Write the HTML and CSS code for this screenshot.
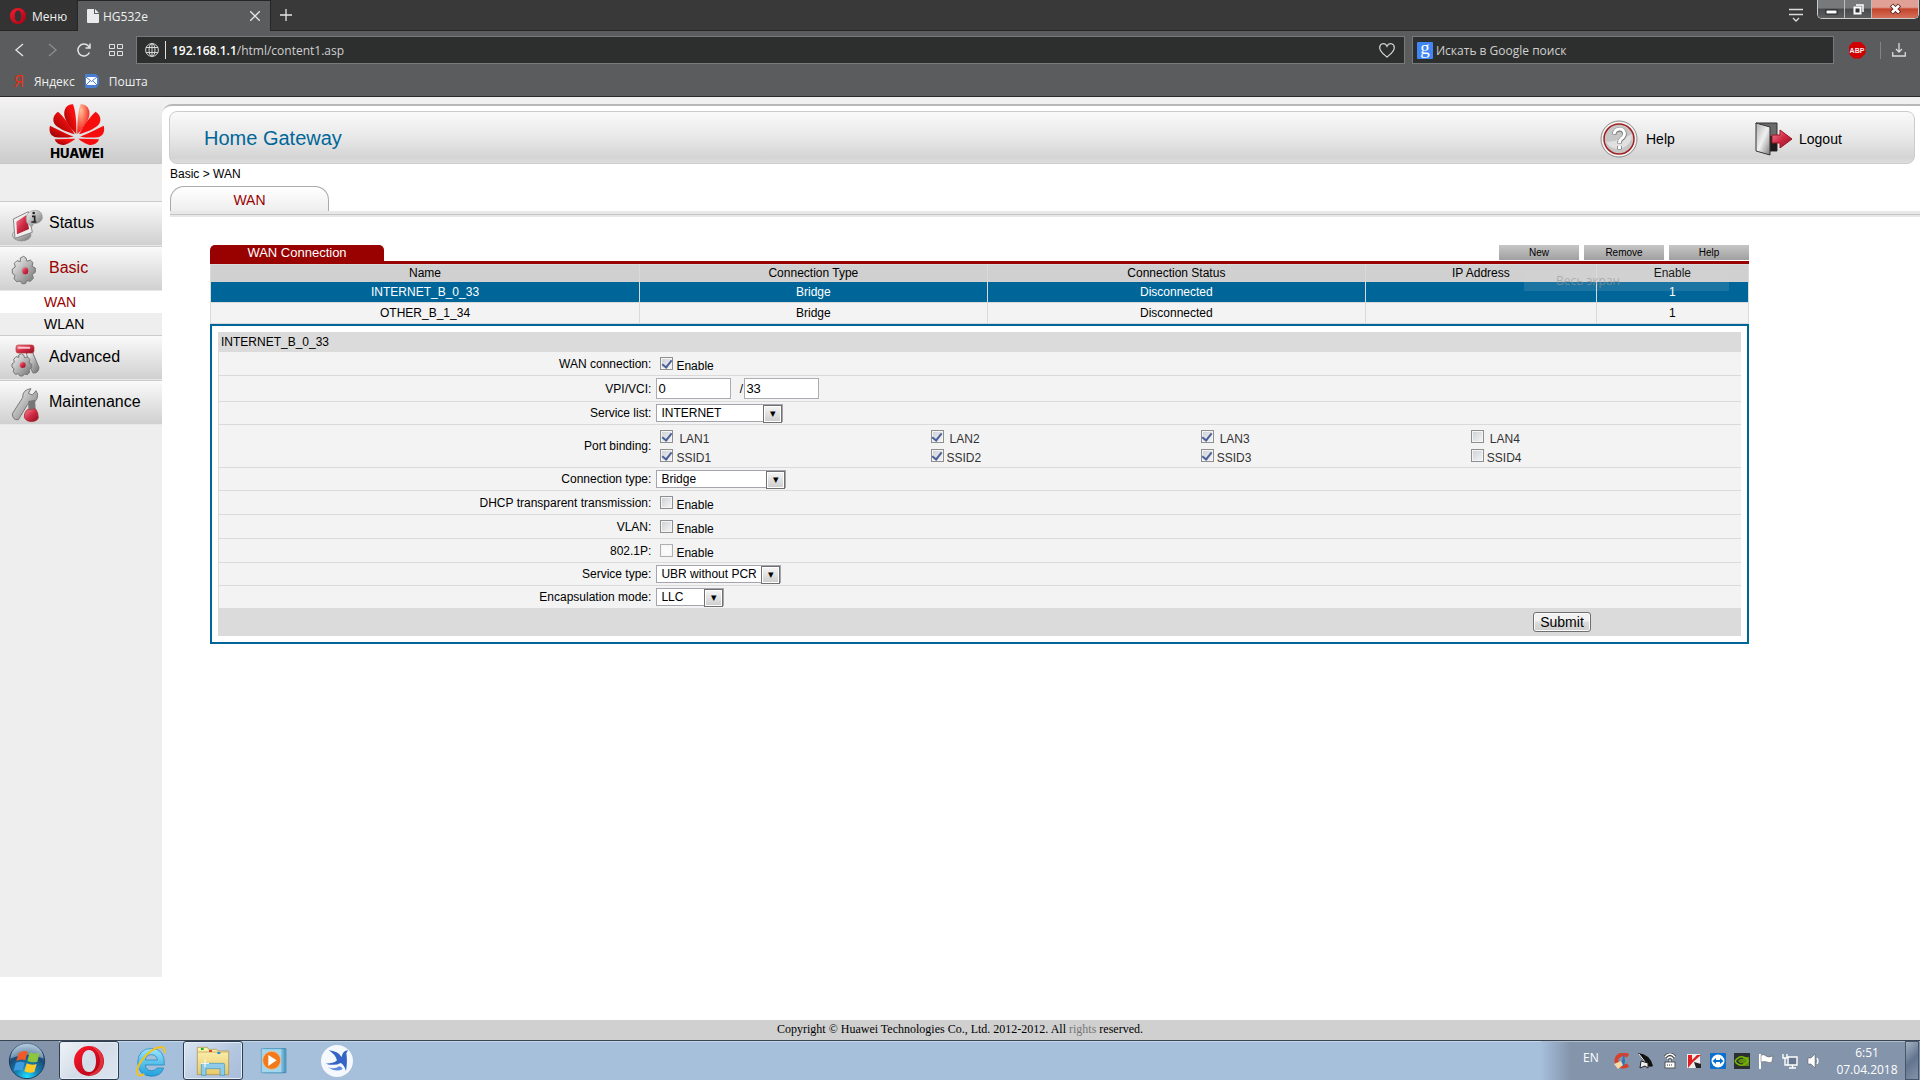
FILE: index.html
```html
<!DOCTYPE html>
<html lang="en">
<head>
    <meta charset="UTF-8">
    <meta name="viewport" content="width=device-width, initial-scale=1.0">
    <title>HG532e</title>
    <link rel="stylesheet" href="styles.css">
</head>
<body>
    <svg class="defs" aria-hidden="true">
        <defs>
            <linearGradient id="metal" x1="0" y1="0" x2="1" y2="1">
                <stop offset="0" stop-color="#fafafa"/>
                <stop offset="0.5" stop-color="#b4b4b4"/>
                <stop offset="1" stop-color="#6e6e6e"/>
            </linearGradient>
            <linearGradient id="red" x1="0" y1="0" x2="1" y2="1">
                <stop offset="0" stop-color="#f08a9a"/>
                <stop offset="0.5" stop-color="#d02a44"/>
                <stop offset="1" stop-color="#8c1020"/>
            </linearGradient>
            <linearGradient id="door" x1="0" y1="0" x2="1" y2="1">
                <stop offset="0" stop-color="#b0b0b0"/>
                <stop offset="0.5" stop-color="#f0f0f0"/>
                <stop offset="1" stop-color="#7a7a7a"/>
            </linearGradient>
            <linearGradient id="petal" x1="1" y1="0" x2="0" y2="1">
                <stop offset="0.3" stop-color="#f81010"/>
                <stop offset="1" stop-color="#8c0000"/>
            </linearGradient>
            <radialGradient id="petalLight" cx="0.7" cy="0.2" r="0.8">
                <stop offset="0" stop-color="#ffc09a"/>
                <stop offset="1" stop-color="#f41a12"/>
            </radialGradient>
            <linearGradient id="opera" x1="0" y1="0" x2="1" y2="1">
                <stop offset="0" stop-color="#ff1b2d"/>
                <stop offset="1" stop-color="#a70014"/>
            </linearGradient>
            <radialGradient id="orb" cx="0.5" cy="0.95" r="0.9">
                <stop offset="0" stop-color="#25e0ff"/>
                <stop offset="0.35" stop-color="#1583b8"/>
                <stop offset="0.7" stop-color="#1b4a75"/>
                <stop offset="1" stop-color="#7ea6c6"/>
            </radialGradient>
            <linearGradient id="folder" x1="0" y1="0" x2="0" y2="1">
                <stop offset="0" stop-color="#fdf3b5"/>
                <stop offset="1" stop-color="#e8c968"/>
            </linearGradient>
            <linearGradient id="ie" x1="0" y1="0" x2="0" y2="1">
                <stop offset="0" stop-color="#9be6fb"/>
                <stop offset="1" stop-color="#1f9fdc"/>
            </linearGradient>
        </defs>
    </svg>

    <header class="browser">
        <div class="tabbar">
            <button class="opera-menu" type="button">
                <svg width="16" height="16" viewBox="0 0 16 16"><path fill="url(#opera)" fill-rule="evenodd" d="M8 0a8 8 0 1 0 0 16a8 8 0 1 0 0-16M8 2.400c2.200 0 3.200 2.600 3.200 5.600s-1 5.600-3.200 5.600s-3.200-2.600-3.200-5.600s1-5.600 3.200-5.600"/></svg>
                Меню
            </button>
            <div class="tab">
                <svg width="12" height="14" viewBox="0 0 12 14"><path fill="#e8eaeb" d="M1 0h6v5h5v8q0 1-1 1h-10q-1 0-1-1v-12q0-1 1-1zM8 0l4 4h-4z"/></svg>
                <span class="tab-title">HG532e</span>
                <button class="icon-button" type="button" aria-label="Close tab">
                    <svg width="10" height="10" viewBox="0 0 10 10"><path d="M0 0l10 10M10 0l-10 10" stroke="#e6e6e6" stroke-width="1.300"/></svg>
                </button>
            </div>
            <button class="icon-button new-tab" type="button" aria-label="New tab">
                <svg width="12" height="12" viewBox="0 0 12 12"><path d="M6 0v12M0 6h12" stroke="#e6e6e6" stroke-width="1.300"/></svg>
            </button>
            <button class="icon-button tab-list" type="button" aria-label="Tab menu">
                <svg width="14" height="14" viewBox="0 0 14 14"><path d="M0 1.500h14M0 6.500h14M4 10l3 3l3-3" fill="none" stroke="#dcdcdc" stroke-width="1.300"/></svg>
            </button>
            <div class="window-buttons">
                <button class="window-button" type="button" aria-label="Minimize">
                    <svg width="13" height="12" viewBox="0 0 13 12"><rect x="1" y="7" width="11" height="4" fill="#fff" stroke="#222"/></svg>
                </button>
                <button class="window-button" type="button" aria-label="Restore">
                    <svg width="13" height="13" viewBox="0 0 13 13"><path d="M4 2h7v7" fill="none" stroke="#fff" stroke-width="1.500"/><rect x="2.500" y="4.500" width="6" height="6" fill="#333" stroke="#fff" stroke-width="2"/></svg>
                </button>
                <button class="window-button window-close" type="button" aria-label="Close">
                    <svg width="13" height="12" viewBox="0 0 13 12"><path d="M2.500 2l8 8M10.500 2l-8 8" stroke="#5a2320" stroke-width="4.500"/><path d="M3 2.500l7 7M10 2.500l-7 7" stroke="#fff" stroke-width="2.600"/></svg>
                </button>
            </div>
        </div>

        <div class="toolbar">
            <button class="icon-button" type="button" aria-label="Back">
                <svg width="14" height="14" viewBox="0 0 14 14"><path d="M10 1l-7 6l7 6" fill="none" stroke="#e2e2e2" stroke-width="1.400"/></svg>
            </button>
            <button class="icon-button" type="button" aria-label="Forward">
                <svg width="14" height="14" viewBox="0 0 14 14"><path d="M4 1l7 6l-7 6" fill="none" stroke="#8b8c8e" stroke-width="1.400"/></svg>
            </button>
            <button class="icon-button" type="button" aria-label="Reload">
                <svg width="14" height="14" viewBox="0 0 14 14"><path d="M12.400 9.500a6 6 0 1 1-1-6.500l1.200 1.500M13 0.500v4.500h-4.500" fill="none" stroke="#e2e2e2" stroke-width="1.500"/></svg>
            </button>
            <button class="icon-button" type="button" aria-label="Speed dial">
                <svg width="14" height="12" viewBox="0 0 14 12"><path d="M.5.500h5v4h-5zM8.500.500h5v4h-5zM.5 7.500h5v4h-5zM8.500 7.500h5v4h-5z" fill="none" stroke="#e2e2e2"/></svg>
            </button>
            <div class="address">
                <svg width="14" height="14" viewBox="0 0 14 14"><g fill="none" stroke="#d8d8d8"><circle cx="7" cy="7" r="6.400"/><ellipse cx="7" cy="7" rx="3" ry="6.400"/><path d="M7 .5v13M1 4.500h12M1 9.500h12"/></g></svg>
                <span class="address-line"></span>
                <span class="url"><b>192.168.1.1</b>/html/content1.asp</span>
                <button class="icon-button" type="button" aria-label="Add to bookmarks">
                    <svg width="16" height="15" viewBox="0 0 16 15"><path d="M8 14c-4-3.500-7.300-5.500-7.300-9.300c0-4.500 5.500-5.500 7.300-1.500c1.800-4 7.300-3 7.300 1.500c0 3.800-3.300 5.800-7.300 9.300z" fill="none" stroke="#d8d8d8" stroke-width="1.200"/></svg>
                </button>
            </div>
            <label class="search">
                <span class="google">g</span>
                <input class="search-input" type="text" placeholder="Искать в Google поиск" aria-label="Искать в Google поиск">
            </label>
            <button class="icon-button adblock" type="button" aria-label="Adblock">
                <span class="abp">ABP</span>
            </button>
            <button class="icon-button downloads" type="button" aria-label="Downloads">
                <svg width="14" height="14" viewBox="0 0 14 14"><path d="M7 0v9M4 6l3 3l3-3M.7 9v4h12.600v-4" fill="none" stroke="#dcdcdc" stroke-width="1.300"/></svg>
            </button>
        </div>

        <nav class="bookmarks">
            <a class="bookmark" href="#"><span class="yandex">Я</span>Яндекс</a>
            <a class="bookmark" href="#">
                <svg width="16" height="16" viewBox="0 0 16 16"><path d="M1 1h11l3 4v6l-3 4h-11z" fill="#4a7ed0"/><rect x="2" y="4" width="11" height="8" fill="#fff"/><path d="M2 4l5.500 4.500l5.500-4.500M2 12l4-4M13 12l-4-4" fill="none" stroke="#4a7ed0"/></svg>
                Пошта
            </a>
        </nav>
    </header>

    <div class="page">
        <aside class="sidebar">
            <div class="logo">
                <svg width="56" height="42" viewBox="149 311 168 126">
                    <g fill="url(#petal)">
                        <path d="M231 401C232 375 229 330 221 312C205 311 192 325 195 345C199 367 215 386 231 401"/>
                        <path d="M226 402C212 375 190 345 176 334C160 345 158 362 168 374C180 386 205 396 226 402"/>
                        <path d="M223 409C200 400 170 385 152 376C147 395 155 408 170 411C190 413 210 411 223 409"/>
                        <path d="M228 415L166 417C170 430 185 436 197 433C210 428 220 422 228 415"/>
                    </g>
                    <g fill="#f60d0d" transform="translate(465 0) scale(-1 1)">
                        <path fill="url(#petalLight)" d="M231 401C232 375 229 330 221 312C205 311 192 325 195 345C199 367 215 386 231 401"/>
                        <path d="M226 402C212 375 190 345 176 334C160 345 158 362 168 374C180 386 205 396 226 402"/>
                        <path d="M223 409C200 400 170 385 152 376C147 395 155 408 170 411C190 413 210 411 223 409"/>
                        <path d="M228 415L166 417C170 430 185 436 197 433C210 428 220 422 228 415"/>
                    </g>
                </svg>
                <span class="logo-name">HUAWEI</span>
            </div>
            <nav class="menu">
                <a class="menu-item" href="#">
                    <svg width="32" height="34" viewBox="36 58 96 102">
                        <ellipse cx="68" cy="136" rx="28" ry="18" fill="url(#metal)" stroke="#888" stroke-width="2"/>
                        <path d="M43 88L88 66L100 128L48 146Z" fill="#eee" stroke="#888" stroke-width="3"/>
                        <path d="M52 96L82 76L90 118L54 134Z" fill="url(#red)"/>
                        <path d="M84 100c-8-22 6-38 24-38s22 12 22 22s-12 18-26 18l-6 10z" fill="url(#metal)" stroke="#999" stroke-width="2"/>
                        <path d="M99 80h8v16M97 97h15" fill="none" stroke="#222" stroke-width="5"/><circle cx="104" cy="70" r="4" fill="#222"/>
                    </svg>
                    Status
                </a>
                <a class="menu-item active" href="#">
                    <svg width="32" height="34" viewBox="34 190 96 102">
                        <path d="M62 202l10-5l7 5l3 10l10-4l8 8l-3 11l10 5v13l-9 6l3 12l-9 9l-10-2l-5 9h-10l-5-8l-11 2l-8-9l3-10l-8-6v-13l9-6l-3-11l8-8l10 3z" fill="url(#metal)" stroke="#777" stroke-width="3"/>
                        <ellipse cx="77" cy="241" rx="11" ry="12" fill="url(#red)" stroke="#aaa" stroke-width="3"/>
                    </svg>
                    Basic
                </a>
                <div class="submenu">
                    <a class="submenu-item active" href="#">WAN</a>
                    <a class="submenu-item" href="#">WLAN</a>
                </div>
                <a class="menu-item" href="#">
                    <svg width="32" height="34" viewBox="32 454 96 102">
                        <path d="M78 484L96 480L116 528Q114 546 98 544L90 528Z" fill="url(#metal)" stroke="#777" stroke-width="3"/>
                        <rect x="47" y="460" width="54" height="24" rx="7" fill="url(#red)" stroke="#b33" stroke-width="2"/>
                        <rect x="52" y="465" width="38" height="6" rx="3" fill="#fbc4cc"/>
                        <path d="M55 490l8-4l7 4l3 8l9-2l7 8l-3 9l8 5v10l-8 5l2 9l-7 7l-9-2l-5 6h-8l-5-7l-9 2l-6-8l2-9l-6-5v-9l7-5l-2-9l7-8l9 2z" fill="url(#metal)" stroke="#777" stroke-width="3"/>
                        <circle cx="67" cy="520" r="9" fill="url(#red)"/>
                    </svg>
                    Advanced
                </a>
                <a class="menu-item" href="#">
                    <svg width="32" height="36" viewBox="24 584 96 108">
                        <path d="M84 589Q58 592 59 616L28 664Q29 685 46 682L74 636Q104 634 104 606L99 595L88 608L76 603Z" fill="url(#metal)" stroke="#777" stroke-width="3"/>
                        <path d="M76 626L96 622L98 650L76 652Z" fill="#777"/>
                        <path d="M72 652Q62 662 64 676Q70 688 86 688Q104 686 106 676Q106 660 98 650Z" fill="url(#red)" stroke="#a22" stroke-width="2"/>
                    </svg>
                    Maintenance
                </a>
            </nav>
        </aside>

        <main class="content">
            <div class="banner">
                <h1 class="banner-title">Home Gateway</h1>
                <a class="banner-link help-link" href="#">
                    <svg width="38" height="38" viewBox="0 0 38 38">
                        <circle cx="19" cy="19" r="18" fill="#f4f4f4" stroke="#8b8b8b"/>
                        <circle cx="19" cy="19" r="15" fill="#c6c6c6" stroke="#a32020" stroke-width="1.500"/>
                        <path d="M6 22q14-1 26-8a14 14 0 0 1-26 8" fill="#e0e0e0"/>
                        <path d="M14 14.500q1-5 5.500-5t5 4.500q0 3-3 5q-2 1.500-2 4.500M19.500 26v3.500" fill="none" stroke="#777" stroke-width="4.500"/>
                        <path d="M14 14q1-5 5.500-5t5 4.500q0 3-3 5q-2 1.500-2 4.500M19.500 26v3" fill="none" stroke="#fff" stroke-width="3"/>
                    </svg>
                    Help
                </a>
                <a class="banner-link logout-link" href="#">
                    <svg width="38" height="34" viewBox="0 0 38 34">
                        <path d="M1 1h21v28h-8z" fill="#6b6b6b" stroke="#333"/>
                        <path d="M15 14h7v15h-7z" fill="#211a1a"/>
                        <path d="M1 1l14 4v28l-14-4z" fill="url(#door)" stroke="#333"/>
                        <path d="M17 13h8v-5l12 9l-12 9v-5h-8z" fill="url(#red)" stroke="#9c1626"/>
                    </svg>
                    Logout
                </a>
            </div>

            <p class="breadcrumb">Basic &gt; WAN</p>
            <div class="page-tabs">
                <a class="page-tab" href="#">WAN</a>
            </div>

            <section class="wan">
                <div class="wan-head">
                    <h2 class="wan-title">WAN Connection</h2>
                    <div class="wan-buttons">
                        <button class="wan-button" type="button">New</button>
                        <button class="wan-button" type="button">Remove</button>
                        <button class="wan-button" type="button">Help</button>
                    </div>
                </div>
                <div class="wan-list">
                    <table class="wan-table">
                        <thead>
                            <tr>
                                <th class="col-name">Name</th>
                                <th class="col-type">Connection Type</th>
                                <th class="col-status">Connection Status</th>
                                <th class="col-ip">IP Address</th>
                                <th>Enable</th>
                            </tr>
                        </thead>
                        <tbody>
                            <tr class="selected">
                                <td>INTERNET_B_0_33</td>
                                <td>Bridge</td>
                                <td>Disconnected</td>
                                <td></td>
                                <td>1</td>
                            </tr>
                            <tr>
                                <td>OTHER_B_1_34</td>
                                <td>Bridge</td>
                                <td>Disconnected</td>
                                <td></td>
                                <td>1</td>
                            </tr>
                        </tbody>
                    </table>
                    <div class="fading-tip">Весь экран</div>
                </div>

                <form class="wan-form">
                    <h3 class="form-title">INTERNET_B_0_33</h3>
                    <div class="row">
                        <label class="row-label" for="wanEnable">WAN connection:</label>
                        <div class="row-value">
                            <label class="check"><input type="checkbox" id="wanEnable" checked><span>Enable</span></label>
                        </div>
                    </div>
                    <div class="row">
                        <label class="row-label" for="vpi">VPI/VCI:</label>
                        <div class="row-value">
                            <input class="number" type="text" id="vpi" value="0">
                            <span class="slash">/</span>
                            <input class="number" type="text" id="vci" value="33" aria-label="VCI">
                        </div>
                    </div>
                    <div class="row">
                        <label class="row-label" for="serviceList">Service list:</label>
                        <div class="row-value">
                            <span class="select"><select id="serviceList" class="select-service"><option>INTERNET</option></select></span>
                        </div>
                    </div>
                    <div class="row">
                        <span class="row-label">Port binding:</span>
                        <div class="row-value ports">
                            <label class="check lan"><input type="checkbox" checked><span>LAN1</span></label>
                            <label class="check lan"><input type="checkbox" checked><span>LAN2</span></label>
                            <label class="check lan"><input type="checkbox" checked><span>LAN3</span></label>
                            <label class="check lan"><input type="checkbox"><span>LAN4</span></label>
                            <label class="check"><input type="checkbox" checked><span>SSID1</span></label>
                            <label class="check"><input type="checkbox" checked><span>SSID2</span></label>
                            <label class="check"><input type="checkbox" checked><span>SSID3</span></label>
                            <label class="check"><input type="checkbox"><span>SSID4</span></label>
                        </div>
                    </div>
                    <div class="row">
                        <label class="row-label" for="connectionType">Connection type:</label>
                        <div class="row-value">
                            <span class="select"><select id="connectionType" class="select-connection"><option>Bridge</option></select></span>
                        </div>
                    </div>
                    <div class="row">
                        <label class="row-label" for="dhcp">DHCP transparent transmission:</label>
                        <div class="row-value">
                            <label class="check"><input type="checkbox" id="dhcp"><span>Enable</span></label>
                        </div>
                    </div>
                    <div class="row">
                        <label class="row-label" for="vlan">VLAN:</label>
                        <div class="row-value">
                            <label class="check"><input type="checkbox" id="vlan"><span>Enable</span></label>
                        </div>
                    </div>
                    <div class="row">
                        <label class="row-label" for="priority">802.1P:</label>
                        <div class="row-value">
                            <label class="check"><input type="checkbox" id="priority" disabled><span>Enable</span></label>
                        </div>
                    </div>
                    <div class="row">
                        <label class="row-label" for="serviceType">Service type:</label>
                        <div class="row-value">
                            <span class="select"><select id="serviceType" class="select-type"><option>UBR without PCR</option></select></span>
                        </div>
                    </div>
                    <div class="row last">
                        <label class="row-label" for="encapsulation">Encapsulation mode:</label>
                        <div class="row-value">
                            <span class="select"><select id="encapsulation" class="select-mode"><option>LLC</option></select></span>
                        </div>
                    </div>
                    <div class="form-footer">
                        <button class="submit" type="button">Submit</button>
                    </div>
                </form>
            </section>
        </main>
    </div>

    <footer class="copyright">Copyright © Huawei Technologies Co., Ltd. 2012-2012. All <span class="dim">rights</span> reserved.</footer>

    <div class="taskbar">
        <button class="start" type="button" aria-label="Start">
            <svg width="38" height="38" viewBox="24 93 114 114">
                <circle cx="81" cy="150" r="53" fill="url(#orb)" stroke="#1e3f5f" stroke-width="3"/>
                <path d="M32 142a49 46 0 0 1 98 0q-49-22-98 0" fill="#fff" opacity="0.350"/>
                <path d="M56 126q14-10 27-4l-7 26q-14-6-27 2z" fill="#f0592a"/>
                <path d="M89 124q14 7 30 1l-7 27q-15 5-30-2z" fill="#8cc63f"/>
                <path d="M47 156q14-7 27-1l-7 24q-14-5-26 2z" fill="#3f9be0"/>
                <path d="M80 157q15 7 30 2l-7 24q-15 5-30-2z" fill="#fdc928"/>
            </svg>
        </button>
        <button class="task open focused" type="button" aria-label="Opera">
            <svg width="30" height="30" viewBox="0 0 30 30"><path fill="url(#opera)" fill-rule="evenodd" d="M15 0a15 15 0 1 0 0 30a15 15 0 1 0 0-30M15 4c5 0 7 5 7 11s-2 11-7 11s-7-5-7-11s2-11 7-11"/><path d="M20 1a15 15 0 0 1 0 28q-3 1-6 0c7-2 12-7 12-14s-4-12-10-15z" fill="#ff5a5a" opacity="0.500"/></svg>
        </button>
        <button class="task" type="button" aria-label="Internet Explorer">
            <svg width="32" height="32" viewBox="406 98 96 96">
                <path d="M494 158h-57q2 17 19 17q11 0 16-8h20q-8 25-37 25q-40-2-41-42q2-41 42-42q40 2 38 50M437 143h36q-2-16-18-16t-18 16" fill="url(#ie)" stroke="#1b7fb8" stroke-width="2"/>
                <path d="M494 122q4-22-16-17q-26 6-50 37q-24 34-12 46q6 4 18-3" fill="none" stroke="#f5c21b" stroke-width="6"/>
            </svg>
        </button>
        <button class="task open" type="button" aria-label="Explorer">
            <svg width="34" height="30" viewBox="588 108 102 90">
                <path d="M592 194v-82h30l4 6h24l4 5h32v71z" fill="url(#folder)" stroke="#a58a3c" stroke-width="2"/>
                <path d="M594 126h90" stroke="#cdb162" stroke-width="3"/>
                <path d="M603 114h8v6h-8z" fill="#1fb51f"/><path d="M627 120h9v6h-9z" fill="#d8452c"/><path d="M652 126h9v6h-9z" fill="#2c8fd8"/>
                <path d="M604 196v-32q0-4 4-4h62q4 0 4 4v32h-14v-20h-42v20z" fill="#8dcbe8" stroke="#3f93bd" stroke-width="2"/>
                <path d="M615 148v24M603 160h24" stroke="#fff" stroke-width="3"/>
            </svg>
        </button>
        <button class="task" type="button" aria-label="Media Player">
            <svg width="30" height="28" viewBox="780 113 90 84">
                <path d="M800 118h58v72h-58z" fill="#5fa9d0" stroke="#357fa8" stroke-width="2"/>
                <path d="M792 118h60v72h-60z" fill="#85c4e2" stroke="#357fa8" stroke-width="2"/>
                <path d="M784 118h62v72h-62z" fill="#a3d5ec" stroke="#4f98be" stroke-width="2"/>
                <circle cx="815" cy="153" r="27" fill="#f37a1c" stroke="#fbc38b" stroke-width="2"/>
                <path d="M805 137l25 16l-25 17z" fill="#fff"/>
            </svg>
        </button>
        <button class="task" type="button" aria-label="Swallow">
            <svg width="32" height="32" viewBox="963 102 96 96">
                <circle cx="1011" cy="150" r="48" fill="#f5f8fc"/>
                <path d="M986 118Q1014 120 1025 138Q1028 118 1044 118L1039 127Q1043 150 1038 180Q1032 160 1022 156Q1004 166 977 158Q1002 158 1011 148Q1006 130 986 118Z" fill="#3565c4"/>
                <path d="M984 168q18 8 34-2q8 2 10 8q-20 12-44-6" fill="#5d8be0"/>
            </svg>
        </button>

        <div class="tray">
            <span class="lang">EN</span>
            <div class="tray-icons">
                <svg width="16" height="16" viewBox="0 0 16 16"><path d="M14 3a7 6 0 1 0 0 9" fill="none" stroke="#d7402b" stroke-width="4"/><path d="M10 0l-2 8l-6 5l8 0l1-5z" fill="#2d74b8"/><path d="M0 11l7-3l2 4l-5 4z" fill="#f5d9a8"/></svg>
                <svg width="16" height="16" viewBox="0 0 16 16"><path d="M0 0q12 1 15 13q-3 2-7-1z" fill="#111"/><path d="M1 1l6 8" stroke="#fff"/><path d="M3 8l7 2v5l-3-2l-5 2z" fill="#eee" stroke="#222"/></svg>
                <svg width="16" height="16" viewBox="0 0 16 16"><path d="M3 4q5-6 10 0M5 6q3-4 6 0M8 7v3" fill="none" stroke="#444" stroke-width="3"/><path d="M3 4q5-6 10 0M5 6q3-4 6 0M8 7v3" fill="none" stroke="#fff" stroke-width="1.400"/><rect x="3" y="9" width="10" height="6" fill="#fff" stroke="#555"/><path d="M5 12h6" stroke="#333" stroke-dasharray="1 1"/></svg>
                <svg width="16" height="16" viewBox="0 0 16 16"><rect x="1" y="1" width="13" height="14" fill="#eee"/><path d="M2 2h4v5l5-5h4l-8 7l-5 6z" fill="#e02020"/><path d="M8 9l7 2v4h-5z" fill="#222"/></svg>
                <svg width="16" height="16" viewBox="0 0 16 16"><rect width="16" height="16" rx="1" fill="#0b6fd0"/><circle cx="8" cy="8" r="6.500" fill="#fff"/><path d="M2.500 8l3.500-3v2h4v-2l3.500 3l-3.500 3v-2h-4v2z" fill="#0b6fd0"/></svg>
                <svg width="16" height="16" viewBox="0 0 16 16"><rect width="16" height="16" fill="#2c2f31"/><path d="M1 8q4-5 8-4t5 4q-4 5-8 4t-5-4" fill="none" stroke="#76b900" stroke-width="1.500"/><path d="M4 8q2-3 5-2t2 3q-3 2-5 1M9 4h6v9h-6z" fill="#76b900" opacity="0.700"/></svg>
                <svg width="16" height="16" viewBox="0 0 16 16"><path d="M2 1v15" stroke="#fff" stroke-width="2"/><path d="M3 2q3-1 5 1t7 0q-1 4-1 6q-3 1-5 0t-6 0z" fill="#fff" stroke="#555" stroke-width="0.500"/></svg>
                <svg width="16" height="16" viewBox="0 0 16 16"><path d="M1 1v4h4v-4M3 5v7h3" fill="none" stroke="#fff" stroke-width="1.400"/><path d="M6 4h9v8h-9zM7 15h7M10.500 12v3" fill="#66778f" stroke="#fff" stroke-width="1.400"/></svg>
                <svg width="16" height="16" viewBox="0 0 16 16"><path d="M2 5h3l4-4v14l-4-4h-3z" fill="#fff" stroke="#555" stroke-width="0.500"/><path d="M11 5q2 3 0 6" fill="none" stroke="#fff" stroke-width="1.300"/></svg>
            </div>
            <time class="clock"><span>6:51</span><span>07.04.2018</span></time>
            <button class="show-desktop" type="button" aria-label="Show desktop"></button>
        </div>
    </div>
</body>
</html>
```
FILE: styles.css
```css
* {
    box-sizing: border-box;
}
body {
    display: flex;
    flex-direction: column;
    min-height: 100vh;
    margin: 0;
    font-family: "Liberation Sans", Arial, sans-serif;
    font-size: 12px;
    color: #000;
    background: #fff;
}
h1, h2, h3, p {
    margin: 0;
    font-weight: normal;
}
a {
    color: inherit;
    text-decoration: none;
}
button, input, select {
    font-family: inherit;
    font-size: inherit;
    color: inherit;
}
svg {
    display: block;
    flex: none;
}
.defs {
    position: absolute;
    width: 0;
    height: 0;
}

/* Browser window */
.browser {
    height: 97px;
    border-bottom: 1px solid #28292a;
    background: #5b5c5e;
    color: #f0f0f0;
    font-family: "Open Sans", "Noto Sans", sans-serif;
}
.tabbar {
    display: flex;
    height: 31px;
    border-bottom: 1px solid #262626;
    background: #393939;
}
.icon-button {
    display: flex;
    align-items: center;
    justify-content: center;
    padding: 0;
    border: none;
    background: none;
}
.opera-menu {
    display: flex;
    align-items: center;
    gap: 6px;
    width: 78px;
    padding: 2px 0 0 10px;
    border: none;
    border-right: 1px solid #262626;
    background: #333;
}
.tab {
    display: flex;
    align-items: center;
    gap: 4px;
    width: 193px;
    height: 31px;
    padding: 0 10px 0 9px;
    border-top: 1px solid #262626;
    border-right: 1px solid #262626;
    background: #5b5c5e;
}
.tab-title {
    flex: 1;
}
.new-tab {
    width: 29px;
}
.tab-list {
    width: 14px;
    margin-left: auto;
    margin-right: 14px;
}
.window-buttons {
    display: flex;
    height: 19px;
    margin-right: 1px;
    border: 1px solid #ccc;
    border-top: none;
    border-radius: 0 0 5px 5px;
    overflow: hidden;
}
.window-button {
    display: flex;
    align-items: center;
    justify-content: center;
    width: 27px;
    padding: 0;
    border: none;
    border-right: 1px solid #bbb;
    background: linear-gradient(#77797b 45%, #48494b 50%, #5d5e60);
}
.window-close {
    width: 46px;
    border-right: none;
    background: linear-gradient(#e0a095 40%, #c4442c 50%, #d4705a);
}
.toolbar {
    display: flex;
    align-items: center;
    height: 38px;
    padding: 0 14px 0 4px;
}
.toolbar > .icon-button {
    width: 32px;
}
.address {
    display: flex;
    align-items: center;
    gap: 6px;
    flex: 1;
    height: 28px;
    margin-left: 4px;
    padding: 0 9px 0 8px;
    border: 1px solid #77797a;
    background: #2d2f2e;
}
.address-line {
    width: 1px;
    height: 18px;
    background: #e0e0e0;
}
.url {
    flex: 1;
    color: #d0d0d0;
}
.url b {
    color: #fff;
    font-weight: 600;
}
.search {
    display: flex;
    align-items: center;
    gap: 3px;
    width: 422px;
    height: 28px;
    margin-left: 7px;
    padding: 0 4px;
    border: 1px solid #77797a;
    background: #2d2f2e;
}
.google {
    width: 16px;
    height: 17px;
    border-radius: 1px;
    background: #4285f4;
    color: #fff;
    font: 19px/12px "Liberation Serif", serif;
    text-align: center;
}
.search-input {
    flex: 1;
    min-width: 0;
    padding: 0;
    border: none;
    background: none;
}
.search-input::placeholder {
    color: #d0d0d0;
}
.toolbar > .adblock {
    width: 47px;
    border-right: 1px solid #838485;
}
.abp {
    width: 17px;
    background: #d00000;
    clip-path: polygon(30% 0, 70% 0, 100% 30%, 100% 70%, 70% 100%, 30% 100%, 0 70%, 0 30%);
    font: bold 7px/17px "Liberation Sans", sans-serif;
    text-align: center;
}
.toolbar > .downloads {
    width: 25px;
    justify-content: flex-end;
}
.bookmarks {
    display: flex;
    gap: 9px;
    padding: 3px 14px;
}
.bookmark {
    display: flex;
    align-items: center;
    gap: 9px;
    height: 18px;
}
.yandex {
    width: 11px;
    color: #f22b10;
    font-size: 16px;
}

/* Router page */
.page {
    display: flex;
    flex: 1;
    margin-bottom: 43px;
    background: #f1f1f1;
}
.sidebar {
    width: 162px;
    background: #eee;
}
.logo {
    display: flex;
    flex-direction: column;
    align-items: center;
    height: 67px;
    padding: 7px 8px 0 0;
    border-bottom: 1px solid #c8c8c8;
    background: linear-gradient(#f4f2f2, #e6e6e6 40%, #ccc);
}
.logo-name {
    font: 800 13px/15px Inter, sans-serif;
}
.menu {
    margin-top: 37px;
}
.menu-item {
    display: flex;
    align-items: center;
    gap: 6px;
    height: 45px;
    padding: 0 0 1px 11px;
    border-top: 1px solid #ccc;
    border-bottom: 1px solid #e8e8e8;
    background: linear-gradient(#fafafa, #d0d0d0);
    font-size: 16px;
}
.menu-item svg {
    margin-top: 5px;
}
.active {
    color: #900;
}
.submenu {
    font-size: 14px;
}
.submenu-item {
    display: block;
    padding-left: 44px;
    line-height: 22px;
}
.submenu-item.active {
    background: #fff;
}
.content {
    flex: 1;
    min-width: 0;
    margin-top: 7px;
    border-top: 2px solid #b8b8b8;
    border-radius: 10px 0 0 0;
    background: #fff;
}
.banner {
    display: flex;
    align-items: center;
    height: 53px;
    margin: 5px 5px 0 7px;
    padding: 2px 0 0 34px;
    border: 1px solid #ccc;
    border-radius: 8px;
    background: linear-gradient(#fafafa, #e8e8e8 50%, #d4d4d4 90%, #dedede);
}
.banner-title {
    flex: 1;
    color: #069;
    font-size: 20px;
}
.banner-link {
    display: flex;
    align-items: center;
    font-size: 14px;
}
.help-link {
    gap: 8px;
    width: 155px;
}
.logout-link {
    gap: 6px;
    width: 159px;
}
.breadcrumb {
    padding-left: 8px;
    line-height: 20px;
}
.page-tabs {
    height: 31px;
    margin: 2px 0 0 8px;
    background: linear-gradient(#e8e8e8 3px, #c4c4c4 3px, #c4c4c4 4px, #e8e8e8 4px) 0 100% / 100% 6px no-repeat;
}
.page-tab {
    display: block;
    width: 159px;
    height: 25px;
    border: 1px solid #aaa;
    border-bottom: none;
    border-radius: 14px 14px 0 0;
    background: linear-gradient(#fff, #eee);
    color: #900;
    font-size: 14px;
    line-height: 27px;
    text-align: center;
}
.wan {
    margin: 28px 171px 0 48px;
}
.wan-head {
    display: flex;
    justify-content: space-between;
    border-bottom: 3px solid #900;
}
.wan-title {
    width: 174px;
    border-radius: 5px 5px 0 0;
    background: #900;
    color: #fff;
    font-size: 13px;
    line-height: 16px;
    text-align: center;
}
.wan-buttons {
    display: flex;
    gap: 5px;
    height: 15px;
}
.wan-button {
    width: 80px;
    padding: 0;
    border: none;
    background: linear-gradient(#c6c6c6, #a0a0a0);
    font-size: 10px;
}
.wan-list {
    position: relative;
}
.wan-table {
    width: 100%;
    table-layout: fixed;
    border-collapse: collapse;
    text-align: center;
}
.wan-table th, .wan-table td {
    height: 21px;
    padding: 0;
    border: 1px solid #dadada;
    background: #f3f3f3;
}
.wan-table th {
    height: 17px;
    border-bottom: none;
    background: #d0d0d0;
    font-weight: normal;
}
.wan-table .selected td {
    border-top: none;
    background: #069;
    color: #fff;
}
.col-name {
    width: 27.9%;
}
.col-type {
    width: 22.6%;
}
.col-status {
    width: 24.6%;
}
.col-ip {
    width: 15%;
}
/* Browser tip on its way out */
.fading-tip {
    position: absolute;
    top: 6px;
    right: 20px;
    width: 205px;
    padding-left: 32px;
    background: rgba(220, 220, 220, 0.120);
    color: rgba(150, 150, 150, 0.600);
    font: 12px/21px "Open Sans", "Noto Sans", sans-serif;
}
.wan-form {
    padding: 6px;
    border: 2px solid #069;
}
.form-title {
    padding-left: 3px;
    background: #dbdbdb;
    font-size: 12px;
    line-height: 20px;
}
.row {
    display: flex;
    align-items: center;
    min-height: 24px;
    border-bottom: 1px solid #dadada;
    border-left: 1px solid #dadada;
    background: #f3f3f3;
}
.row:has(select) {
    min-height: 23px;
}
.row.last {
    min-height: 22px;
    border-bottom: none;
}
.row-label {
    width: 29%;
    padding-right: 9px;
    text-align: right;
}
.row-value {
    display: flex;
    align-items: center;
    flex: 1;
    padding: 2px 0;
}
.check {
    display: flex;
    align-items: center;
    gap: 3px;
    height: 19px;
}
.check span {
    padding-top: 4px;
}
.check input {
    display: flex;
    align-items: center;
    justify-content: center;
    appearance: none;
    width: 13px;
    height: 13px;
    margin: 0;
    border: 1px solid #8e8f8f;
    background: linear-gradient(135deg, #cbcfd5, #f6f6f6);
    box-shadow: inset 0 0 0 1px #f4f4f4;
}
.check input:checked::before {
    content: "";
    width: 4px;
    height: 8px;
    margin-bottom: 2px;
    border: solid #4b5f9a;
    border-width: 0 2px 2px 0;
    transform: rotate(38deg);
}
.check input:disabled {
    border-color: #b1b1b1;
    background: #fafafa;
}
.ports {
    display: grid;
    grid-template-columns: repeat(4, 1fr);
    color: #333;
}
.check.lan {
    gap: 6px;
}
.number {
    width: 75px;
    height: 21px;
    margin-left: -4px;
    padding: 0 1px;
    border: 1px solid #abadb3;
    background: #fff;
    font-size: 13px;
}
.slash {
    width: 17px;
    padding-left: 3px;
    text-align: center;
}
.select {
    position: relative;
    margin-left: -4px;
}
.select select {
    display: block;
    appearance: none;
    height: 18px;
    padding: 0 0 0 4px;
    border: 1px solid #a5a5ad;
    border-radius: 0;
    background: #fff;
}
.select::after {
    content: "▾";
    position: absolute;
    top: 1px;
    right: 1px;
    width: 17px;
    height: 16px;
    border: 1px solid #707070;
    background: linear-gradient(#f6f6f6, #ccc);
    box-shadow: inset 0 0 0 1px #fff;
    font: 11px/16px "DejaVu Sans", sans-serif;
    text-align: center;
    pointer-events: none;
}
.select-service {
    width: 127px;
}
.select-connection {
    width: 130px;
}
.select-type {
    width: 125px;
}
.select-mode {
    width: 68px;
}
.form-footer {
    display: flex;
    justify-content: flex-end;
    padding: 4px 150px 4px 0;
    background: #dbdbdb;
}
.submit {
    width: 58px;
    height: 20px;
    padding: 0;
    border: 1px solid #707070;
    border-radius: 3px;
    background: linear-gradient(#f2f2f2 45%, #dcdcdc 50%, #cfcfcf);
    box-shadow: inset 0 0 0 1px #fafafa;
    font-size: 14px;
    line-height: 16px;
}
.copyright {
    padding-bottom: 2px;
    background: #d0d0d0;
    font: 12px/18px "Liberation Serif", serif;
    text-align: center;
}
.dim {
    color: #777;
}

/* Windows taskbar */
.taskbar {
    display: flex;
    height: 40px;
    border-top: 1px solid #3a4554;
    background: #a6bfdb;
    box-shadow: inset 0 1px #c5d6e8;
    font-family: "Open Sans", "Noto Sans", sans-serif;
}
.start {
    display: flex;
    align-items: center;
    justify-content: center;
    width: 59px;
    padding: 0 5px 0 0;
    border: none;
    background: #8394ab;
}
.task {
    display: flex;
    align-items: center;
    justify-content: center;
    width: 60px;
    margin-right: 2px;
    padding: 0;
    border: 1px solid transparent;
    background: none;
}
.task.open {
    border-color: #2e3d50;
    border-radius: 3px;
    background: linear-gradient(135deg, #dbe5f1, #b4c7e0 60%, #a8bddb);
    box-shadow: inset 0 0 0 1px #e4edf6;
}
.task.focused {
    background: linear-gradient(135deg, #f0f3f7, #d2dce8 50%, #dde5ef);
}
.tray {
    display: flex;
    align-items: center;
    margin-left: auto;
    padding: 0 1px 0 42px;
    background: linear-gradient(90deg, #a6bfdb, #8394ab 30px);
    box-shadow: inset 0 1px #b0bdcd;
    color: #fff;
}
.lang {
    width: 31px;
    margin-bottom: 6px;
}
.tray-icons {
    display: flex;
    gap: 8px;
}
.clock {
    display: flex;
    flex-direction: column;
    width: 83px;
    padding-left: 7px;
    line-height: 17px;
    text-align: center;
}
.show-desktop {
    width: 14px;
    height: 39px;
    padding: 0;
    border: 1px solid #46566b;
    background: linear-gradient(135deg, #a5b2c3, #62758e 50%, #8394ab);
}
```
